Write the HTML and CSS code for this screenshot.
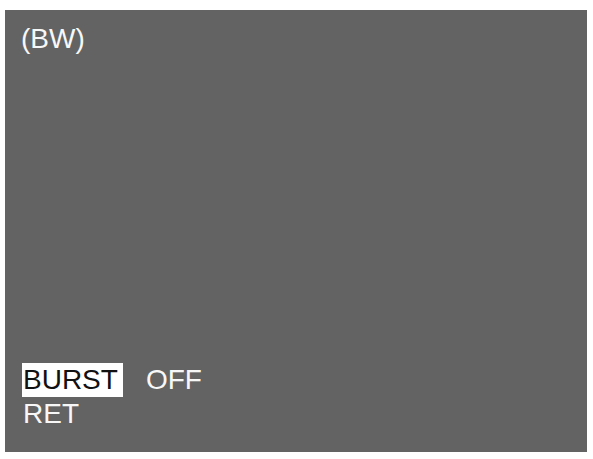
FILE: index.html
```html
<!DOCTYPE html>
<html>
<head>
<meta charset="utf-8">
<link rel="stylesheet" href="styles.css">
</head>
<body>
<div class="screen">
  <div class="mode">(BW)</div>
  <div class="menu">
    <div class="row"><span class="item selected">BURST</span><span class="value">OFF</span></div>
    <div class="row"><span class="item">RET</span></div>
  </div>
</div>
</body>
</html>
```
FILE: styles.css
```css
html, body {
  margin: 0;
  padding: 0;
  background: #ffffff;
}
body {
  font-family: "Liberation Sans", Arial, sans-serif;
}
.screen {
  box-sizing: border-box;
  margin: 10px 0 0 5px;
  width: 582px;
  height: 442px;
  background: #636363;
  color: #f7f7f7;
  padding: 14px 0 21px 15px;
  display: flex;
  flex-direction: column;
  justify-content: space-between;
}
.mode {
  font-size: 28px;
  line-height: 30px;
  padding-left: 1px;
}
.menu {
  font-size: 28px;
  line-height: 34px;
  padding-left: 2px;
}
.row {
  display: flex;
  align-items: baseline;
}
.item {
  padding: 0 5px 0 1px;
}
.selected {
  background: #ffffff;
  color: #111111;
}
.value {
  margin-left: 23px;
}
```
